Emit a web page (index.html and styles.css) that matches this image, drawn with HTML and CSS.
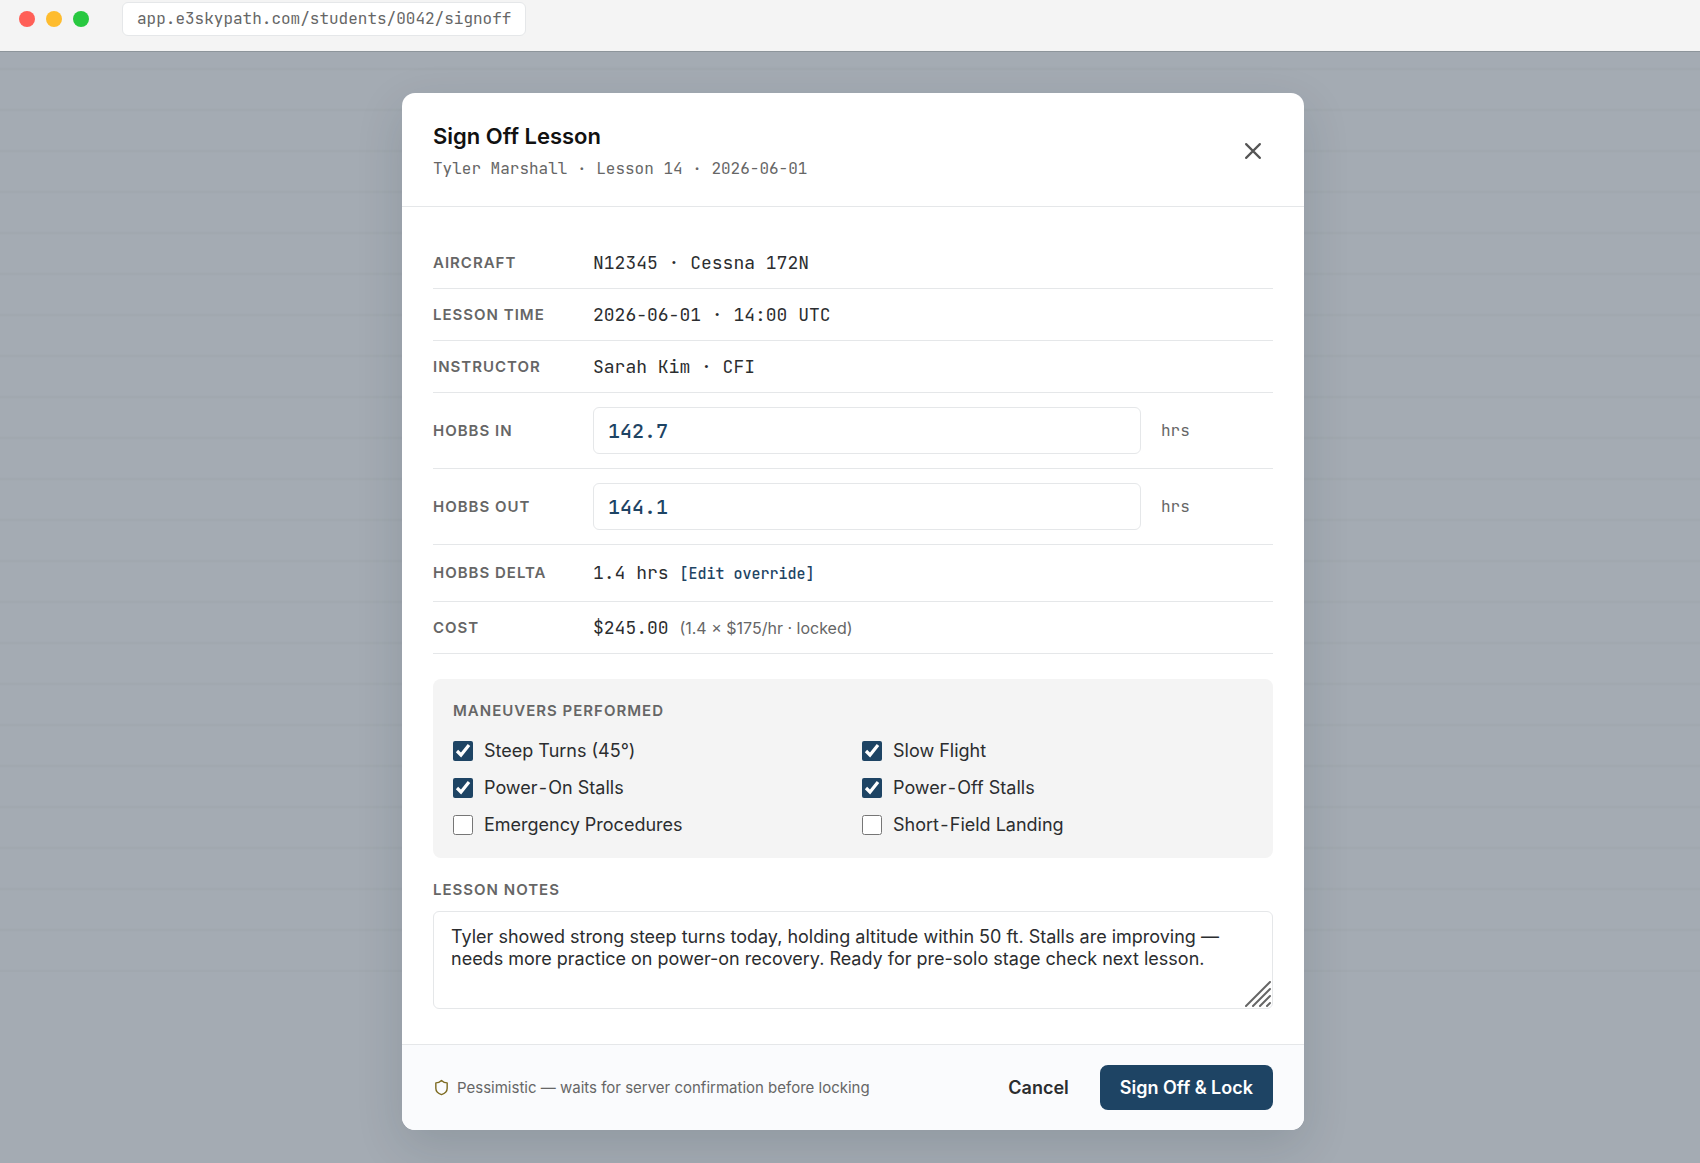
FILE: index.html
```html
<!DOCTYPE html>
<html lang="en">
<head>
    <meta charset="UTF-8">
    <meta name="viewport" content="width=device-width, initial-scale=1.0">
    <title>Sign Off Lesson</title>
    <link rel="stylesheet" href="styles.css">
</head>
<body>

    <header class="browser-bar">
        <div class="dots">
            <span class="dot red"></span>
            <span class="dot yellow"></span>
            <span class="dot green"></span>
        </div>
        <div class="url">app.e3skypath.com/students/0042/signoff</div>
    </header>

    <main class="backdrop">
        <form class="modal" role="dialog" aria-labelledby="modalTitle">

            <div class="modal-header">
                <div>
                    <h1 id="modalTitle">Sign Off Lesson</h1>
                    <p class="subtitle">Tyler Marshall · Lesson 14 · 2026-06-01</p>
                </div>
                <button type="button" class="close" aria-label="Close">
                    <svg width="22" height="22" viewBox="0 0 24 24" fill="none" stroke="currentColor" stroke-width="2.400" stroke-linecap="round"><path d="M4.500 4.500l15 15M19.500 4.500l-15 15"/></svg>
                </button>
            </div>

            <div class="modal-body">
                <div class="row">
                    <span class="label">AIRCRAFT</span>
                    <span class="value">N12345 · Cessna 172N</span>
                </div>
                <div class="row">
                    <span class="label">LESSON TIME</span>
                    <span class="value">2026-06-01 · 14:00 UTC</span>
                </div>
                <div class="row">
                    <span class="label">INSTRUCTOR</span>
                    <span class="value">Sarah Kim · CFI</span>
                </div>
                <div class="row row-input">
                    <label class="label" for="hobbsIn">HOBBS IN</label>
                    <input type="text" id="hobbsIn" class="hobbs" value="142.7">
                    <span class="unit">hrs</span>
                </div>
                <div class="row row-input">
                    <label class="label" for="hobbsOut">HOBBS OUT</label>
                    <input type="text" id="hobbsOut" class="hobbs" value="144.1">
                    <span class="unit">hrs</span>
                </div>
                <div class="row row-delta">
                    <span class="label">HOBBS DELTA</span>
                    <span class="value">1.4 hrs <button type="button" class="override">[Edit override]</button></span>
                </div>
                <div class="row">
                    <span class="label">COST</span>
                    <span class="value">$245.00 <span class="hint">(1.4 × $175/hr · locked)</span></span>
                </div>

                <!-- Maneuver checklist -->
                <section class="maneuvers">
                    <h2 class="label">MANEUVERS PERFORMED</h2>
                    <div class="checks">
                        <label><input type="checkbox" checked> <span>Steep Turns (45°)</span></label>
                        <label><input type="checkbox" checked> <span>Slow Flight</span></label>
                        <label><input type="checkbox" checked> <span>Power<span class="dash">-</span>On Stalls</span></label>
                        <label><input type="checkbox" checked> <span>Power<span class="dash">-</span>Off Stalls</span></label>
                        <label><input type="checkbox"> <span>Emergency Procedures</span></label>
                        <label><input type="checkbox"> <span>Short<span class="dash">-</span>Field Landing</span></label>
                    </div>
                </section>

                <label class="label notes-label" for="notes">LESSON NOTES</label>
                <div class="notes-wrap">
                    <textarea id="notes" class="notes">Tyler showed strong steep turns today, holding altitude within 50 ft. Stalls are improving — needs more practice on power-on recovery. Ready for pre-solo stage check next lesson.</textarea>
                    <svg class="grip" width="26" height="26" viewBox="0 0 26 26" fill="none" stroke="#666" stroke-width="2" stroke-linecap="round"><path d="M1 25L25 1M8 25L25 8M15 25l10-10M22 25l3-3"/></svg>
                </div>
            </div>

            <div class="modal-footer">
                <p class="lock-note">
                    <svg width="17" height="17" viewBox="0 0 24 24" fill="none" stroke="#7d6b22" stroke-width="2" stroke-linejoin="round"><path d="M20 13c0 5-3.500 7.500-8 9-4.500-1.500-8-4-8-9V5.500c3 0 6-1.500 8-3.500 2 2 5 3.500 8 3.500z"/></svg>
                    Pessimistic — waits for server confirmation before locking
                </p>
                <button type="button" class="btn">Cancel</button>
                <button type="submit" class="btn primary">Sign Off &amp; Lock</button>
            </div>
        </form>
    </main>

</body>
</html>
```

FILE: styles.css
```css
* {
    box-sizing: border-box;
}
body {
    margin: 0;
    min-height: 100vh;
    display: flex;
    flex-direction: column;
    font-family: Inter, "Liberation Sans", sans-serif;
    font-size: 18px;
    color: #2b2d2f;
    background-color: #a4abb3;
}
h1, h2, p {
    margin: 0;
}
button, input, textarea {
    font-family: inherit;
    color: inherit;
}

/* Browser bar */
.browser-bar {
    display: flex;
    align-items: center;
    gap: 33px;
    height: 52px;
    padding: 0 19px 13px;
    background-color: #f4f4f4;
    border-bottom: 1px solid #8d959b;
}
.dots {
    display: flex;
    gap: 11px;
}
.dot {
    width: 16px;
    height: 16px;
    border-radius: 50%;
}
.red {
    background-color: #ff5f57;
}
.yellow {
    background-color: #febc2e;
}
.green {
    background-color: #28c840;
}
.url {
    padding: 0 14px;
    border: 1px solid #e5e7e9;
    border-radius: 6px;
    background-color: #fff;
    color: #666;
    font-family: "JetBrains Mono", "DejaVu Sans Mono", monospace;
    font-size: 16px;
    line-height: 32px;
}

/* Dimmed page with faint table lines behind the dialog */
.backdrop {
    flex: 1;
    padding: 41px 24px 33px 30px;
    background: repeating-linear-gradient(#a4abb3 0, #a4abb3 15px, #a0a7ae 17px, #a4abb3 19px, #a4abb3 41px) no-repeat;
    background-size: 100% 920px;
}
.modal {
    max-width: 902px;
    margin: 0 auto;
    border-radius: 13px;
    background-color: #fff;
    box-shadow: 0 16px 48px rgba(20, 40, 50, 0.14);
    overflow: hidden;
}
.modal-header {
    display: flex;
    align-items: center;
    justify-content: space-between;
    padding: 28px 31px 26px;
    border-bottom: 1px solid #e5e7e9;
}
h1 {
    font-size: 22px;
    font-weight: 600;
    line-height: 30px;
    color: #111;
}
.subtitle {
    margin-top: 6px;
    font-family: "JetBrains Mono", "DejaVu Sans Mono", monospace;
    font-size: 16px;
    line-height: 23px;
    color: #666;
}
.close {
    display: flex;
    align-items: center;
    justify-content: center;
    width: 40px;
    height: 40px;
    padding: 0;
    border: 0;
    background: none;
    color: #555;
}
.modal-body {
    padding: 30px 31px 35px;
}

/* Lesson detail rows */
.row {
    display: grid;
    grid-template-columns: 140px 1fr 112px;
    column-gap: 20px;
    align-items: center;
    min-height: 52px;
    border-bottom: 1px solid #e5e7e9;
}
.row-input {
    min-height: 76px;
}
.row-delta {
    min-height: 57px;
}
.label {
    font-size: 15px;
    font-weight: 600;
    line-height: 20px;
    letter-spacing: 1px;
    color: #666;
}
.value {
    font-family: "JetBrains Mono", "DejaVu Sans Mono", monospace;
    font-size: 18px;
    line-height: 24px;
}
.hobbs {
    width: 100%;
    height: 47px;
    padding: 0 14px;
    border: 1px solid #e5e7e9;
    border-radius: 6px;
    background-color: #fff;
    color: #1e4464;
    font-family: "JetBrains Mono", "DejaVu Sans Mono", monospace;
    font-size: 20px;
    font-weight: 500;
}
.unit {
    font-family: "JetBrains Mono", "DejaVu Sans Mono", monospace;
    font-size: 16px;
    color: #666;
}
.override {
    padding: 0;
    border: 0;
    background: none;
    color: #1e4464;
    font-family: "JetBrains Mono", "DejaVu Sans Mono", monospace;
    font-size: 15px;
    font-weight: 500;
}
.hint {
    font-family: Inter, "Liberation Sans", sans-serif;
    font-size: 16px;
    color: #666;
}

/* Maneuvers */
.maneuvers {
    margin: 25px 0 22px;
    padding: 22px 20px 21px;
    border-radius: 8px;
    background-color: #f4f4f4;
}
.checks {
    display: grid;
    grid-template-columns: 1fr 1fr;
    gap: 13px 18px;
    margin-top: 18px;
}
.checks label {
    display: flex;
    align-items: center;
    gap: 11px;
    line-height: 24px;
}
.checks input {
    width: 20px;
    height: 20px;
    margin: 0;
    accent-color: #1e4464;
}
.dash {
    font-family: "JetBrains Mono", "DejaVu Sans Mono", monospace;
    line-height: 1;
}

/* Notes */
.notes-label {
    display: block;
}
.notes-wrap {
    position: relative;
    margin-top: 11px;
}
.notes {
    display: block;
    width: 100%;
    height: 98px;
    padding: 14px 17px;
    border: 1px solid #e5e7e9;
    border-radius: 6px;
    background-color: #fff;
    font-size: 18px;
    line-height: 22px;
    resize: none;
}
.grip {
    position: absolute;
    right: 2px;
    bottom: 2px;
}

/* Footer */
.modal-footer {
    display: flex;
    align-items: center;
    gap: 11px;
    padding: 20px 31px;
    border-top: 1px solid #e5e7e9;
    background-color: #fafbfd;
}
.lock-note {
    display: flex;
    align-items: center;
    gap: 7px;
    margin-right: auto;
    font-size: 15px;
    color: #666;
}
.btn {
    height: 45px;
    padding: 0 20px;
    border: 0;
    border-radius: 8px;
    background: none;
    font-size: 18px;
    font-weight: 600;
}
.primary {
    background-color: #1e4464;
    color: #fff;
}
```
